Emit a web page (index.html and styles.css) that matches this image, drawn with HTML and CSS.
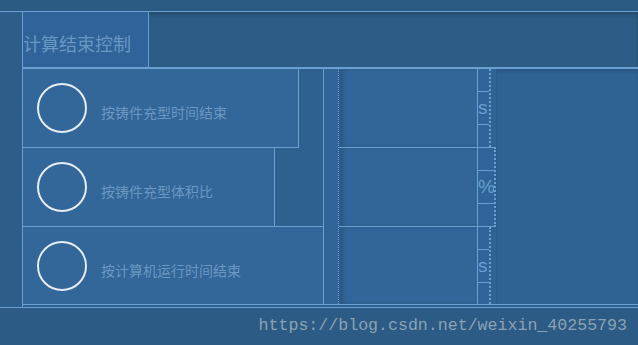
FILE: index.html
```html
<!DOCTYPE html>
<html lang="zh-CN">
<head>
  <meta charset="UTF-8">
  <meta name="viewport" content="width=device-width, initial-scale=1.0">
  <title>计算结束控制</title>
  <link rel="stylesheet" href="styles.css">
</head>
<body>
  <div class="topbar"></div>

  <div class="frame">
    <!-- left strip -->
    <div class="side"></div>

    <div class="panel">
      <div class="head">
        <div class="title">计算结束控制</div>
      </div>

      <div class="body">
        <!-- Option rows -->
        <div class="options">
          <div class="opt opt1">
            <span class="radio"></span>
            <span class="label">按铸件充型时间结束</span>
          </div>
          <div class="opt opt2">
            <span class="radio"></span>
            <span class="label">按铸件充型体积比</span>
          </div>
          <div class="opt opt3">
            <span class="radio"></span>
            <span class="label">按计算机运行时间结束</span>
          </div>
        </div>

        <div class="strip"></div>

        <!-- Value inputs -->
        <div class="values">
          <div class="val val1"></div>
          <div class="val val2"></div>
          <div class="val val3"></div>
        </div>

        <!-- Units -->
        <div class="units">
          <div class="unit unit1"><div class="tick">s</div></div>
          <div class="unit unit2"><div class="tick">%</div></div>
          <div class="unit unit3"><div class="tick">s</div></div>
        </div>

        <div class="rest"></div>
      </div>
    </div>
  </div>

  <div class="footer">https://blog.csdn.net/weixin_40255793</div>
</body>
</html>
```

FILE: styles.css
```css
/* Page */
body {
  margin: 0;
  width: 638px;
  height: 345px;
  overflow: hidden;
  background: #2b5a83;
  font-family: "Noto Sans CJK SC", "Noto Sans", sans-serif;
}

.topbar {
  height: 11px;
  border-bottom: 1px solid #6a9fd1;
  background: #2b5a83;
}

/* Main frame */
.frame {
  display: flex;
  height: 295px;
}

.side {
  width: 22px;
  background: #2c5e89;
}

.panel {
  flex: 1;
  border-left: 1px solid #6a9fd1;
  background: #2e6190;
}

/* Header */
.head {
  display: flex;
  height: 55px;
  border-bottom: 2px solid #6a9fd1;
  background: #2c5d86;
  box-shadow: inset 0 3px 3px rgba(0, 0, 0, 0.18);
}

.title {
  width: 125px;
  border-right: 1px solid #6a9fd1;
  padding-top: 6px;
  display: flex;
  align-items: center;
  font-size: 18px;
  color: #6897c4;
  background: #30639a;
  white-space: nowrap;
}

/* Body */
.body {
  display: flex;
  height: 235px;
  border-bottom: 1px solid #6a9fd1;
}

.options {
  width: 300px;
  display: flex;
  flex-direction: column;
}

.opt {
  display: flex;
  align-items: flex-start;
  padding: 14px 0 0 14px;
  box-sizing: border-box;
  background: #336699;
}

.opt1 {
  width: 276px;
  height: 79px;
  border-right: 1px solid #6a9fd1;
  border-bottom: 1px solid #6a9fd1;
}

.opt2 {
  width: 252px;
  height: 78px;
  border-right: 1px solid #6a9fd1;
}

.opt3 {
  width: 300px;
  height: 78px;
  border-top: 1px solid #6a9fd1;
}

.radio {
  width: 46px;
  height: 46px;
  border: 2px solid #e6edf5;
  border-radius: 50%;
  flex-shrink: 0;
}

.label {
  margin: 19px 0 0 14px;
  font-size: 14px;
  line-height: 20px;
  color: #6a98c3;
  white-space: nowrap;
}

/* spacer between options and values */
.strip {
  width: 14px;
  border-left: 1px solid #6a9fd1;
  border-right: 1px dotted #6a9fd1;
  background: #31659a;
}

.values {
  width: 138px;
  display: flex;
  flex-direction: column;
}

.val {
  background: #32669a;
  box-shadow: inset 5px 0 4px rgba(0, 0, 0, 0.12);
}

.val1 {
  height: 78px;
  border-bottom: 1px solid #6a9fd1;
}

.val2 {
  height: 78px;
  border-bottom: 1px solid #6a9fd1;
}

.val3 {
  height: 77px;
}

/* Unit labels */
.units {
  display: flex;
  flex-direction: column;
  border-left: 1px solid #6a9fd1;
  background: #2f6394;
}

.unit {
  box-sizing: border-box;
  padding-top: 22px;
  overflow: hidden;
  background: #30649a;
}

.unit1 {
  width: 13px;
  height: 78px;
  border-right: 2px dotted #6a9fd1;
}

.unit2 {
  width: 18px;
  height: 80px;
  border-top: 1px solid #6a9fd1;
  border-bottom: 1px solid #6a9fd1;
  border-right: 2px dotted #6a9fd1;
}

.unit3 {
  width: 13px;
  height: 77px;
  border-right: 2px dotted #6a9fd1;
}

.tick {
  height: 32px;
  border-top: 1px solid #6a9fd1;
  border-bottom: 1px solid #6a9fd1;
  font-family: "Liberation Sans", Arial, sans-serif;
  font-size: 19px;
  line-height: 32px;
  color: #6a9fd1;
  white-space: nowrap;
}

.rest {
  flex: 1;
  background: #2f6394;
  box-shadow: inset 0 3px 3px rgba(0, 0, 0, 0.12);
}

/* Footer with watermark */
.footer {
  height: 37px;
  border-top: 1px solid #6a9fd1;
  background: #2c5c85;
  text-align: right;
  padding-right: 11px;
  font-family: "Liberation Mono", "Courier New", monospace;
  font-size: 16.6px;
  line-height: 36px;
  color: #8ca1b3;
}
```
